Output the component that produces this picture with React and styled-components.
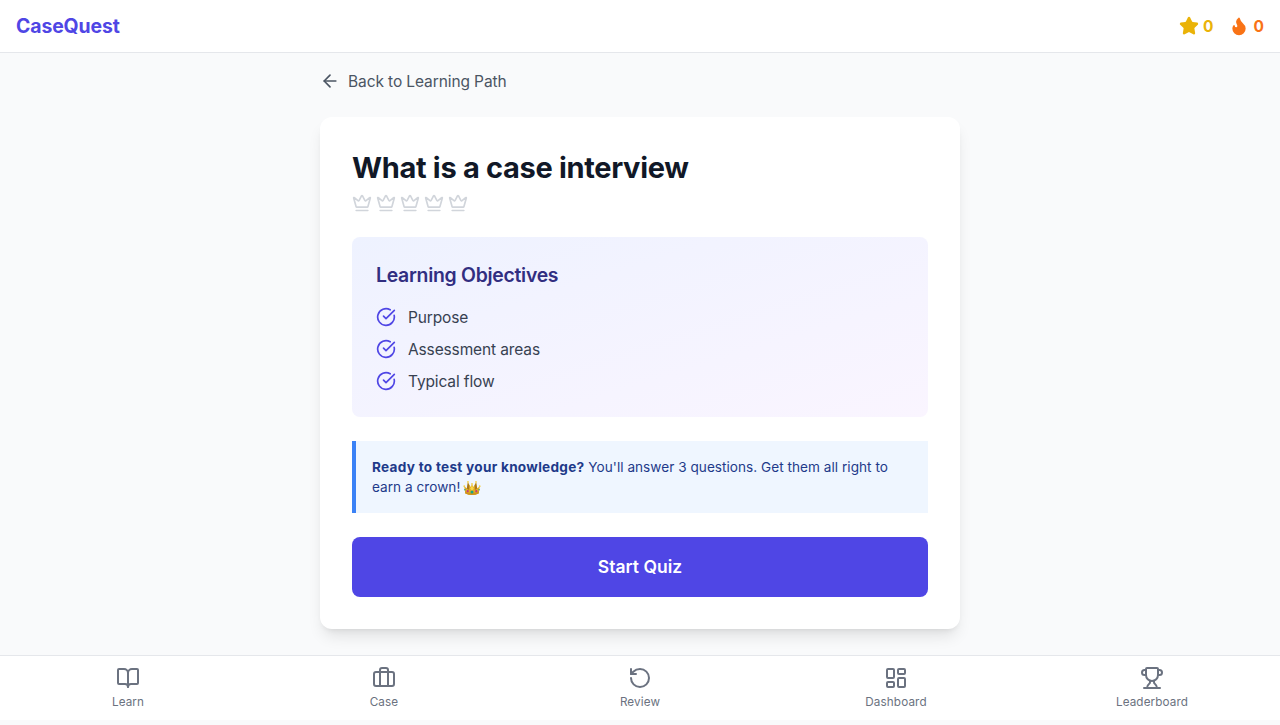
import React from "react";
import styled, { createGlobalStyle } from "styled-components";
import {
  ArrowLeft,
  BookOpen,
  Briefcase,
  CircleCheckBig,
  Crown,
  Flame,
  LayoutDashboard,
  RotateCcw,
  Star,
  Trophy,
} from "lucide-react";

const GlobalStyle = createGlobalStyle`
  *, *::before, *::after { box-sizing: border-box; }
  body {
    margin: 0;
    background: #f9fafb;
    font-family: Inter, "Liberation Sans", sans-serif;
    font-size: 15.5px;
    line-height: 24px;
    color: #111827;
  }
  h1, h2, p, ul { margin: 0; padding: 0; }
  svg { display: block; flex-shrink: 0; }
`;

const Shell = styled.div`
  display: flex;
  flex-direction: column;
  height: 725px;
  padding-bottom: 5px;
  overflow: hidden;
`;

const Header = styled.header`
  display: flex;
  align-items: center;
  justify-content: space-between;
  height: 53px;
  padding: 0 16px;
  background: #fff;
  border-bottom: 1px solid #e5e7eb;
`;

const Brand = styled.div`
  font-size: 19.4px;
  line-height: 28px;
  font-weight: 700;
  letter-spacing: -0.1px;
  color: #4f46e5;
`;

const Stats = styled.div`
  display: flex;
  gap: 16px;
`;

const Stat = styled.div`
  display: flex;
  align-items: center;
  gap: 4px;
  font-weight: 700;
  color: ${(p) => p.$color};
`;

const Label = styled.span`
  display: block;
  padding-top: 2px;
  line-height: 22px;
`;

const StatValue = styled(Label)`
  min-width: 10.6px;
  text-align: center;
`;

const Main = styled.main`
  flex: 1;
  min-height: 0;
  width: 640px;
  margin: 0 auto;
  padding-top: 16px;
`;

const BackLink = styled.button`
  display: flex;
  align-items: center;
  gap: 8px;
  margin: 0 0 24px;
  padding: 0;
  border: 0;
  background: none;
  font: inherit;
  letter-spacing: -0.1px;
  color: #4b5563;
`;

const Card = styled.section`
  padding: 32px;
  background: #fff;
  border-radius: 12px;
  box-shadow: 0 10px 15px -3px rgba(0, 0, 0, 0.1), 0 4px 6px -4px rgba(0, 0, 0, 0.1);
`;

const Title = styled.h1`
  && { padding-top: 2px; }
  font-size: 29px;
  line-height: 34px;
  font-weight: 700;
  letter-spacing: -0.32px;
`;

const Crowns = styled.div`
  display: flex;
  gap: 4px;
  margin: 8px 0 24px;
  color: #d1d5db;
`;

const Objectives = styled.div`
  height: 180px;
  padding: 24px;
  border-radius: 8px;
  background: linear-gradient(to bottom right, #eef2ff, #faf5ff);
`;

const Subtitle = styled.h2`
  margin-bottom: 16px;
  font-size: 19.4px;
  line-height: 28px;
  font-weight: 600;
  letter-spacing: -0.27px;
  color: #312e81;
`;

const ObjectiveList = styled.ul`
  display: flex;
  flex-direction: column;
  gap: 8px;
  list-style: none;
`;

const Objective = styled.li`
  display: flex;
  align-items: center;
  gap: 12px;
  letter-spacing: -0.13px;
  color: #374151;
  svg { color: #4f46e5; }
`;

const Notice = styled.p`
  && { padding: 16px; }
  margin: 24px 0;
  border-left: 4px solid #3b82f6;
  background: #eff6ff;
  font-size: 13.6px;
  line-height: 20px;
  letter-spacing: 0.03px;
  color: #1e3a8a;
`;

const NoticeLead = styled.strong`
  font-weight: 700;
  letter-spacing: 0.28px;
`;

const StartButton = styled.button`
  display: block;
  width: 100%;
  height: 60px;
  border: 0;
  border-radius: 8px;
  background: #4f46e5;
  color: #fff;
  font: inherit;
  font-size: 17.5px;
  line-height: 28px;
  font-weight: 600;
  letter-spacing: 0;
`;

const Nav = styled.nav`
  position: relative;
  display: grid;
  grid-template-columns: repeat(5, 1fr);
  height: 65px;
  padding-top: 10px;
  background: #fff;
  border-top: 1px solid #e5e7eb;
`;

const NavItem = styled.div`
  display: flex;
  flex-direction: column;
  align-items: center;
  gap: 4px;
  font-size: 11.7px;
  line-height: 16px;
  letter-spacing: 0.12px;
  color: #6b7280;
`;

const objectives = ["Purpose", "Assessment areas", "Typical flow"];

const tabs = [
  { label: "Learn", Icon: BookOpen },
  { label: "Case", Icon: Briefcase },
  { label: "Review", Icon: RotateCcw },
  { label: "Dashboard", Icon: LayoutDashboard },
  { label: "Leaderboard", Icon: Trophy },
];

const InlineCrown = styled.svg`
  && { display: inline-block; }
  width: 18px;
  height: 16px;
  margin-left: -1px;
  vertical-align: -4px;
`;

function GoldCrown() {
  return (
    <InlineCrown viewBox="0 0 18 16" role="img" aria-label="crown">
      <path d="M1.2 6.5 4 8.2 5 2.4 7.6 7 9 4.3 10.4 7 13 2.4 14 8.2 16.8 6.5 15.7 13.4Q9 16.4 2.3 13.4Z" fill="#e3ad22" />
      <path d="M4.8 2.5 3.8 8.4 6.1 10 6.3 5.3ZM13.2 2.5 14.2 8.4 11.9 10 11.7 5.3Z" fill="#a8771b" />
      <path d="M2 11.2Q9 14.4 16 11.2L15.7 13.4Q9 16.4 2.3 13.4Z" fill="#cf941d" />
      <path d="M7.2 8.6 9 5.6 10.8 8.6 9 10.8Z" fill="#f7d64a" />
      <g fill="#f4cf45">
        <circle cx="1.3" cy="6.2" r="0.9" />
        <circle cx="5" cy="2" r="0.9" />
        <circle cx="9" cy="4" r="0.9" />
        <circle cx="13" cy="2" r="0.9" />
        <circle cx="16.7" cy="6.2" r="0.9" />
      </g>
      <circle cx="9" cy="12" r="1.5" fill="#18a583" />
      <circle cx="4.7" cy="11.2" r="1.1" fill="#c2397f" />
      <circle cx="13.3" cy="11.2" r="1.1" fill="#c2397f" />
      <circle cx="1.9" cy="9.8" r="0.8" fill="#2d9f86" />
      <circle cx="16.1" cy="9.8" r="0.8" fill="#2d9f86" />
    </InlineCrown>
  );
}

export default function App() {
  return (
    <Shell>
      <GlobalStyle />
      <Header>
        <Brand>CaseQuest</Brand>
        <Stats>
          <Stat $color="#eab308"><Star size={20} fill="currentColor" /><StatValue>0</StatValue></Stat>
          <Stat $color="#f97316"><Flame size={20} fill="currentColor" /><StatValue>0</StatValue></Stat>
        </Stats>
      </Header>
      <Main>
        <BackLink><ArrowLeft size={20} /><Label>Back to Learning Path</Label></BackLink>
        <Card>
          <Title>What is a case interview</Title>
          <Crowns>
            {[1, 2, 3, 4, 5].map((n) => <Crown key={n} size={20} />)}
          </Crowns>
          <Objectives>
            <Subtitle>Learning Objectives</Subtitle>
            <ObjectiveList>
              {objectives.map((text) => (
                <Objective key={text}><CircleCheckBig size={20} /><Label>{text}</Label></Objective>
              ))}
            </ObjectiveList>
          </Objectives>
          <Notice>
            <NoticeLead>Ready to test your knowledge?</NoticeLead> You'll answer 3 questions. Get them all right to earn a crown! <GoldCrown />
          </Notice>
          <StartButton>Start Quiz</StartButton>
        </Card>
      </Main>
      <Nav>
        {tabs.map(({ label, Icon }) => (
          <NavItem key={label}><Icon size={24} /><span>{label}</span></NavItem>
        ))}
      </Nav>
    </Shell>
  );
}
